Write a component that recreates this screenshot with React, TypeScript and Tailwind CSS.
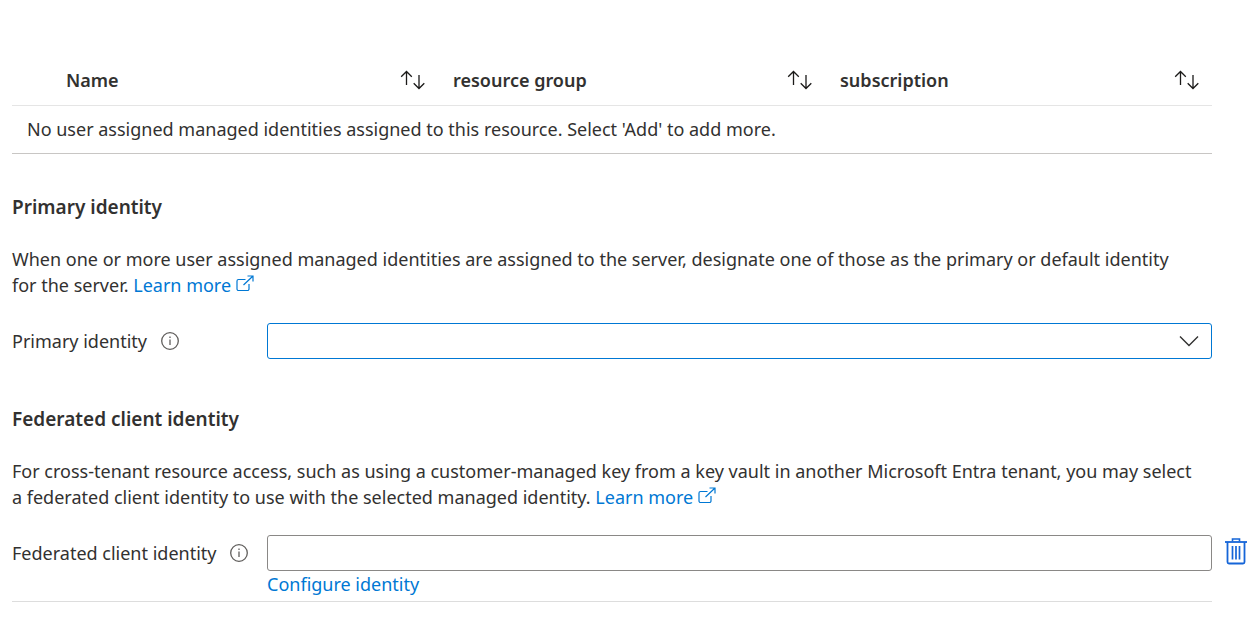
import { useState } from "react";

const columns = ["Name", "resource group", "subscription"];

function SortIcon() {
  return (
    <svg width="26" height="20" viewBox="0 0 26 20" fill="none" stroke="#1b1a19" strokeWidth="1.3" aria-hidden="true">
      <path d="M6.500 15V1.500M1.200 6.800l5.300-5.300 5.300 5.300" />
      <path d="M19 5v13.500M13.700 13.200l5.300 5.300 5.300-5.300" />
    </svg>
  );
}

function ExternalIcon() {
  return (
    <svg className="ml-[5px] inline-block align-baseline" width="18" height="17" viewBox="0 0 18 17" fill="none" stroke="currentColor" strokeWidth="1.2" aria-hidden="true">
      <path d="M9.500 4.500H2.500a1.500 1.500 0 0 0-1.500 1.500v8A1.500 1.500 0 0 0 2.500 15.500h9A1.500 1.500 0 0 0 13 14V9" />
      <path d="M7.500 10 17 1M11.500 1H17v5.500" />
    </svg>
  );
}

function InfoIcon() {
  return (
    <svg width="18" height="18" viewBox="0 0 18 18" fill="none" stroke="#605e5c" aria-hidden="true">
      <circle cx="9" cy="9" r="8.300" strokeWidth="1.300" />
      <path d="M9 7.500v5.500M9 4.500v1.500" strokeWidth="1.300" />
    </svg>
  );
}

function TrashIcon() {
  return (
    <svg width="22" height="28" viewBox="0 0 22 28" fill="none" stroke="#1565d8" aria-hidden="true">
      <path d="M0 5h22" strokeWidth="1.800" />
      <path d="M7.500 4.500V2h7v2.500" strokeWidth="1.600" />
      <path d="M2.500 5v20q0 1.500 1.500 1.500h14q1.500 0 1.500-1.500V5" strokeWidth="1.800" />
      <path d="M7.500 9v13.500M11 9v13.500M14.500 9v13.500" strokeWidth="1.700" />
    </svg>
  );
}

function LearnMore() {
  return (
    <a href="#learn-more" className="whitespace-nowrap text-[#0078d4]">
      Learn more
      <ExternalIcon />
    </a>
  );
}

export default function App() {
  const [client, setClient] = useState("");

  return (
    <main className="pt-[55px] pl-3 font-['Noto_Sans',sans-serif] text-[18px] leading-[26px] text-[#323130]">
      <div className="pr-12">
        <table className="w-full table-fixed border-collapse">
          <colgroup>
            <col className="w-[39px]" />
            <col />
            <col />
            <col />
          </colgroup>
          <thead>
            <tr className="h-[50px] border-b border-[#e5e5e5]">
              <td />
              {columns.map((name) => (
                <th key={name} scope="col" className="px-0 text-left font-semibold">
                  <button type="button" className="flex w-full items-center justify-between pr-3 pl-[15px]">
                    {name}
                    <SortIcon />
                  </button>
                </th>
              ))}
            </tr>
          </thead>
          <tbody>
            <tr className="h-12 border-b border-[#c8c6c4]">
              <td colSpan={4} className="px-[15px]">
                No user assigned managed identities assigned to this resource. Select 'Add' to add more.
              </td>
            </tr>
          </tbody>
        </table>
      </div>

      <section className="pt-10">
        <h2 className="text-[19px] font-semibold">Primary identity</h2>
        <p className="mt-[26px] pr-6">
          When one or more user assigned managed identities are assigned to the server, designate one of those as the primary or default identity
          <br />
          for the server. <LearnMore />
        </p>
        <div className="mt-[25px] flex items-center pr-12">
          <div className="flex w-[255px] shrink-0 items-center gap-[14px]">
            <label htmlFor="primary">Primary identity</label>
            <InfoIcon />
          </div>
          <div className="grid flex-1 items-center">
            <select id="primary" className="col-start-1 row-start-1 h-9 w-full appearance-none rounded-[3px] border border-[#0078d4] bg-white px-3">
              <option value="" />
            </select>
            <svg className="pointer-events-none col-start-1 row-start-1 mr-[13px] justify-self-end" width="20" height="12" viewBox="0 0 20 12" fill="none" stroke="#323130" strokeWidth="1.400" aria-hidden="true">
              <path d="m1 1.500 9 9 9-9" />
            </svg>
          </div>
        </div>
      </section>

      <section className="pt-[47px]">
        <h2 className="text-[19px] font-semibold">Federated client identity</h2>
        <p className="mt-[26px] pr-6">
          For cross-tenant resource access, such as using a customer-managed key from a key vault in another Microsoft Entra tenant, you may select
          <br />
          a federated client identity to use with the selected managed identity. <LearnMore />
        </p>
        <div className="mt-[25px] flex items-center pr-[13px]">
          <div className="flex w-[255px] shrink-0 items-center gap-[14px]">
            <label htmlFor="federated">Federated client identity</label>
            <InfoIcon />
          </div>
          <input
            id="federated"
            type="text"
            value={client}
            onChange={(e) => setClient(e.target.value)}
            className="h-9 min-w-0 flex-1 rounded-[3px] border border-[#8a8886] px-3"
          />
          <button type="button" aria-label="Delete" className="ml-[13px] shrink-0 pb-1" onClick={() => setClient("")}>
            <TrashIcon />
          </button>
        </div>
        <div className="mr-12 border-b border-[#dddddd] pb-1 pl-[255px]">
          <a href="#configure" className="text-[#0078d4]">Configure identity</a>
        </div>
      </section>
    </main>
  );
}
